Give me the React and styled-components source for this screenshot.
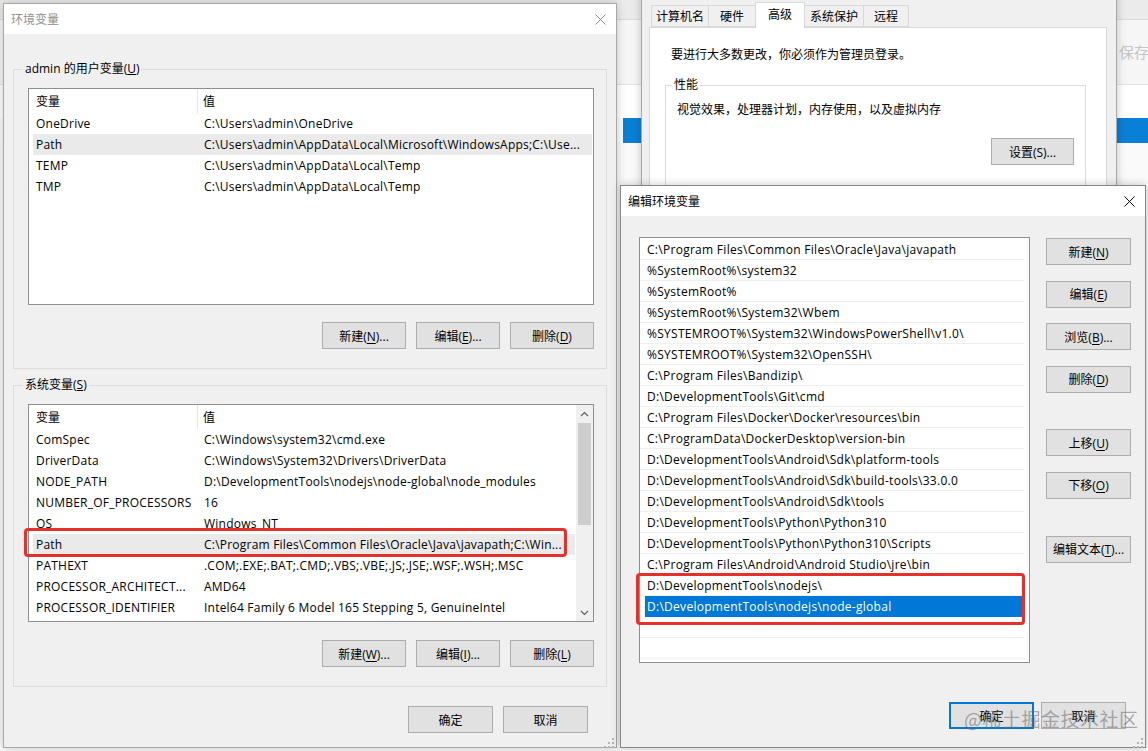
import React from "react";
import styled, { createGlobalStyle } from "styled-components";

const userVars = [
  ["OneDrive", "C:\\Users\\admin\\OneDrive"],
  ["Path", "C:\\Users\\admin\\AppData\\Local\\Microsoft\\WindowsApps;C:\\Use..."],
  ["TEMP", "C:\\Users\\admin\\AppData\\Local\\Temp"],
  ["TMP", "C:\\Users\\admin\\AppData\\Local\\Temp"],
];

const sysVars = [
  ["ComSpec", "C:\\Windows\\system32\\cmd.exe"],
  ["DriverData", "C:\\Windows\\System32\\Drivers\\DriverData"],
  ["NODE_PATH", "D:\\DevelopmentTools\\nodejs\\node-global\\node_modules"],
  ["NUMBER_OF_PROCESSORS", "16"],
  ["OS", "Windows_NT"],
  ["Path", "C:\\Program Files\\Common Files\\Oracle\\Java\\javapath;C:\\Win..."],
  ["PATHEXT", ".COM;.EXE;.BAT;.CMD;.VBS;.VBE;.JS;.JSE;.WSF;.WSH;.MSC"],
  ["PROCESSOR_ARCHITECT...", "AMD64"],
  ["PROCESSOR_IDENTIFIER", "Intel64 Family 6 Model 165 Stepping 5, GenuineIntel"],
];

const pathItems = [
  "C:\\Program Files\\Common Files\\Oracle\\Java\\javapath",
  "%SystemRoot%\\system32",
  "%SystemRoot%",
  "%SystemRoot%\\System32\\Wbem",
  "%SYSTEMROOT%\\System32\\WindowsPowerShell\\v1.0\\",
  "%SYSTEMROOT%\\System32\\OpenSSH\\",
  "C:\\Program Files\\Bandizip\\",
  "D:\\DevelopmentTools\\Git\\cmd",
  "C:\\Program Files\\Docker\\Docker\\resources\\bin",
  "C:\\ProgramData\\DockerDesktop\\version-bin",
  "D:\\DevelopmentTools\\Android\\Sdk\\platform-tools",
  "D:\\DevelopmentTools\\Android\\Sdk\\build-tools\\33.0.0",
  "D:\\DevelopmentTools\\Android\\Sdk\\tools",
  "D:\\DevelopmentTools\\Python\\Python310",
  "D:\\DevelopmentTools\\Python\\Python310\\Scripts",
  "C:\\Program Files\\Android\\Android Studio\\jre\\bin",
];

const GlobalStyle = createGlobalStyle`
  html, body { margin: 0; padding: 0; }
  body {
    width: 1148px;
    height: 751px;
    overflow: hidden;
    font-family: "Open Sans", "Noto Sans CJK SC", sans-serif;
    font-size: 12px;
    color: #000;
  }
`;

const Desktop = styled.div`
  position: relative;
  width: 1148px;
  height: 751px;
  overflow: hidden;
  background: #fbfbfb;
`;

/* page of the app behind the dialogs */
const BackApp = styled.div`
  display: flex;
  flex-direction: column;
  height: 100%;
`;

const BackTop = styled.div`
  height: 19px;
  background: #ebebeb;
  border-bottom: 1px solid #dadada;
`;

const BackHeader = styled.div`
  height: 64px;
  background: #f6f6f6;
  border-bottom: 1px solid #e2e2e2;
  display: flex;
  align-items: center;
  justify-content: flex-end;
`;

const BackHint = styled.span`
  color: #c4c4c4;
  font-size: 15px;
  font-family: "Noto Sans CJK SC", sans-serif;
  width: 29px;
  white-space: nowrap;
  overflow: hidden;
  margin-bottom: 2px;
`;

const BackGap = styled.div`
  height: 33px;
  background: #fff;
`;

const BlueBar = styled.div`
  height: 25px;
  margin-left: 623px;
  background: #0a7fd6;
`;

const BackRest = styled.div`
  flex: 1;
  background: #fafafa;
`;

/* windows */
const Window = styled.section`
  position: absolute;
  left: ${(p) => p.$x}px;
  top: ${(p) => p.$y}px;
  width: ${(p) => p.$w}px;
  height: ${(p) => p.$h}px;
  box-sizing: border-box;
  background: #f0f0f0;
  border: 1px solid ${(p) => (p.$active ? "#858585" : "#a8a8a8")};
  box-shadow: 0 0 9px rgba(0, 0, 0, 0.22);
  display: flex;
  flex-direction: column;
`;

const TitleBar = styled.div`
  height: 30px;
  flex: none;
  background: #fff;
  display: flex;
  align-items: center;
  justify-content: space-between;
  padding: 0 10px 0 7px;
`;

const Title = styled.span`
  font-size: 12px;
  color: ${(p) => (p.$active ? "#000" : "#8f8f8f")};
`;

const CloseIcon = ({ color }) => (
  <svg width="11" height="11" viewBox="0 0 11 11">
    <path d="M0.5 0.5L10.5 10.5M10.5 0.5L0.5 10.5" stroke={color} strokeWidth="1" fill="none" />
  </svg>
);

const Grip = styled.div`
  position: absolute;
  right: 2px;
  bottom: 2px;
  width: 10px;
  height: 10px;
`;

const GripDots = () => (
  <Grip>
    <svg width="10" height="10" viewBox="0 0 10 10">
      {[[8, 0], [8, 4], [4, 4], [8, 8], [4, 8], [0, 8]].map(([x, y]) => (
        <rect key={`${x}-${y}`} x={x} y={y} width="2" height="2" fill="#b4b4b4" />
      ))}
    </svg>
  </Grip>
);

const DialogBody = styled.div`
  flex: 1;
  display: flex;
  flex-direction: column;
  padding: ${(p) => p.$pad};
`;

const GroupBox = styled.div`
  position: relative;
  border: 1px solid #dcdcdc;
  padding: 18px 12px 19px 14px;
  margin-top: ${(p) => p.$mt || 0}px;
`;

const GroupLabel = styled.span`
  position: absolute;
  top: -9px;
  left: ${(p) => p.$left || 8}px;
  padding: 0 2px;
  background: ${(p) => p.$bg || "#f0f0f0"};
  line-height: 16px;
  font-size: 12px;
`;

const ListBox = styled.div`
  position: relative;
  height: ${(p) => p.$h}px;
  box-sizing: border-box;
  border: 1px solid #8f8f8f;
  background: #fff;
  display: flex;
`;

const ListMain = styled.div`
  flex: 1;
  min-width: 0;
`;

const HeaderRow = styled.div`
  display: grid;
  grid-template-columns: 169px 1fr;
  height: 24px;
`;

const HeaderCell = styled.div`
  display: flex;
  align-items: center;
  padding-left: ${(p) => p.$pad}px;
  border-right: ${(p) => (p.$divider ? "1px solid #e5e5e5" : "none")};
`;

const VarRow = styled.div`
  position: relative;
  display: grid;
  grid-template-columns: 165px 1fr;
  height: 21px;
  align-items: center;
  margin: 0 1px 0 4px;
  background: ${(p) => (p.$selected ? "#eaeaea" : "transparent")};
  white-space: nowrap;
  letter-spacing: 0.22px;
`;

const Cell = styled.span`
  padding-left: ${(p) => p.$pad}px;
  overflow: hidden;
`;

const Highlight = styled.div`
  position: absolute;
  top: ${(p) => p.$t}px;
  bottom: ${(p) => p.$b}px;
  left: ${(p) => p.$l}px;
  right: ${(p) => p.$r}px;
  border: 3px solid #e5302b;
  border-radius: 4px;
  pointer-events: none;
`;

const ScrollBar = styled.div`
  width: 17px;
  flex: none;
  background: #f0f0f0;
  display: flex;
  flex-direction: column;
  align-items: center;
`;

const ScrollArrow = styled.div`
  height: 17px;
  display: flex;
  align-items: center;
  justify-content: center;
`;

const ScrollThumb = styled.div`
  width: 13px;
  height: 102px;
  margin-top: 1px;
  background: #cdcdcd;
`;

const ScrollTrack = styled.div`
  flex: 1;
`;

const Chevron = ({ up }) => (
  <svg width="9" height="6" viewBox="0 0 9 6">
    <path d={up ? "M1 5L4.5 1.5L8 5" : "M1 1L4.5 4.5L8 1"} stroke="#606060" strokeWidth="1.2" fill="none" />
  </svg>
);

const ButtonRow = styled.div`
  display: flex;
  justify-content: flex-end;
  gap: ${(p) => p.$gap || 10}px;
  margin-top: ${(p) => p.$mt || 0}px;
  padding-right: ${(p) => p.$pr || 0}px;
`;

const Button = styled.button`
  width: ${(p) => p.$w || 84}px;
  height: 27px;
  margin-top: ${(p) => p.$mt || 0}px;
  padding: 0;
  box-sizing: border-box;
  background: #e1e1e1;
  border: ${(p) => (p.$default ? "2px solid #0078d7" : "1px solid #adadad")};
  font-family: inherit;
  font-size: 12px;
  color: #000;
  flex: none;
  u { text-underline-offset: 2px; }
`;

/* system properties */
const SysBody = styled.div`
  flex: 1;
  padding: 11px 9px 0 7px;
  display: flex;
  flex-direction: column;
`;

const TabStrip = styled.div`
  display: flex;
  align-items: flex-end;
  height: 25px;
  padding-left: 2px;
  position: relative;
  z-index: 1;
`;

const Tab = styled.div`
  width: ${(p) => p.$w}px;
  height: ${(p) => (p.$active ? 26 : 22)}px;
  box-sizing: border-box;
  display: flex;
  align-items: center;
  justify-content: center;
  padding-bottom: ${(p) => (p.$active ? 4 : 0)}px;
  background: ${(p) => (p.$active ? "#fff" : "#f0f0f0")};
  border: 1px solid #d9d9d9;
  border-bottom: ${(p) => (p.$active ? "none" : "1px solid #d9d9d9")};
  margin-left: ${(p) => (p.$first ? 0 : -1)}px;
  margin-bottom: ${(p) => (p.$active ? -1 : 0)}px;
`;

const TabPanel = styled.div`
  flex: 1;
  background: #fff;
  border: 1px solid #d9d9d9;
  padding: 19px 20px 0 15px;
`;

const Notice = styled.div`
  padding-left: 6px;
  height: 16px;
  line-height: 16px;
`;

const PerfGroup = styled.div`
  position: relative;
  margin-top: 22px;
  border: 1px solid #dcdcdc;
  height: 140px;
  padding: 16px 11px 0 11px;
`;

const PerfText = styled.div`
  line-height: 16px;
`;

const PerfActions = styled.div`
  display: flex;
  justify-content: flex-end;
  margin-top: 20px;
`;

/* edit dialog */
const EditTop = styled.div`
  display: flex;
  gap: 16px;
  height: 426px;
`;

const PathList = styled.div`
  width: 391px;
  box-sizing: border-box;
  border: 1px solid #8f8f8f;
  background: #fff;
  padding-top: 1px;
  letter-spacing: 0.28px;
`;

const PathRow = styled.div`
  height: 21px;
  box-sizing: border-box;
  border-bottom: 1px solid #efefef;
  margin-right: 5px;
  display: flex;
  align-items: center;
  white-space: nowrap;
  padding-left: 7px;
`;

const SelectedPath = styled.div`
  height: 21px;
  margin: 0 5px 0 5px;
  padding-left: 2px;
  display: flex;
  align-items: center;
  background: #0078d7;
  color: #fff;
  white-space: nowrap;
`;

const MarkedGroup = styled.div`
  position: relative;
`;

const SideButtons = styled.div`
  display: flex;
  flex-direction: column;
  gap: 15.6px;
  padding-top: 1px;
`;

const Watermark = styled.div`
  position: absolute;
  left: 964px;
  top: 705px;
  font-size: 19px;
  font-family: "Noto Sans CJK SC", sans-serif;
  color: rgba(105, 105, 105, 0.55);
  letter-spacing: 0.5px;
  pointer-events: none;
`;

const VarList = ({ rows, height, scroll, markRow }) => (
  <ListBox $h={height}>
    <ListMain>
      <HeaderRow>
        <HeaderCell $pad={7} $divider>变量</HeaderCell>
        <HeaderCell $pad={5}>值</HeaderCell>
      </HeaderRow>
      {rows.map(([name, value], i) => (
        <VarRow key={name + i} $selected={name === "Path"}>
          <Cell $pad={3}>{name}</Cell>
          <Cell $pad={6}>{value}</Cell>
          {markRow === i && <Highlight $t={-6} $b={-2} $l={-9} $r={8} />}
        </VarRow>
      ))}
    </ListMain>
    {scroll && (
      <ScrollBar>
        <ScrollArrow><Chevron up /></ScrollArrow>
        <ScrollThumb />
        <ScrollTrack />
        <ScrollArrow><Chevron /></ScrollArrow>
      </ScrollBar>
    )}
  </ListBox>
);

const App = () => (
  <Desktop>
    <GlobalStyle />
    <BackApp>
      <BackTop />
      <BackHeader>
        <BackHint>保存后</BackHint>
      </BackHeader>
      <BackGap />
      <BlueBar />
      <BackRest />
    </BackApp>

    {/* 系统属性 */}
    <Window $x={641} $y={-10} $w={476} $h={320}>
      <SysBody>
        <TabStrip>
          <Tab $w={58} $first>计算机名</Tab>
          <Tab $w={48}>硬件</Tab>
          <Tab $w={50} $active>高级</Tab>
          <Tab $w={60}>系统保护</Tab>
          <Tab $w={46}>远程</Tab>
        </TabStrip>
        <TabPanel>
          <Notice>要进行大多数更改，你必须作为管理员登录。</Notice>
          <PerfGroup>
            <GroupLabel $left={6} $bg="#fff">性能</GroupLabel>
            <PerfText>视觉效果，处理器计划，内存使用，以及虚拟内存</PerfText>
            <PerfActions>
              <Button $w={83}>设置(S)...</Button>
            </PerfActions>
          </PerfGroup>
        </TabPanel>
      </SysBody>
    </Window>

    {/* 环境变量 */}
    <Window $x={3} $y={3} $w={614} $h={745}>
      <TitleBar>
        <Title>环境变量</Title>
        <CloseIcon color="#8a8a8a" />
      </TitleBar>
      <DialogBody $pad="35px 9px 0 9px">
        <GroupBox>
          <GroupLabel $left={9}>admin 的用户变量(<u>U</u>)</GroupLabel>
          <VarList rows={userVars} height={217} />
          <ButtonRow $mt={17}>
            <Button>新建(<u>N</u>)...</Button>
            <Button>编辑(<u>E</u>)...</Button>
            <Button>删除(<u>D</u>)</Button>
          </ButtonRow>
        </GroupBox>
        <GroupBox $mt={16}>
          <GroupLabel $left={9}>系统变量(<u>S</u>)</GroupLabel>
          <VarList rows={sysVars} height={218} scroll markRow={5} />
          <ButtonRow $mt={18}>
            <Button>新建(<u>W</u>)...</Button>
            <Button>编辑(<u>I</u>)...</Button>
            <Button>删除(<u>L</u>)</Button>
          </ButtonRow>
        </GroupBox>
        <ButtonRow $mt={19} $pr={19}>
          <Button $w={85}>确定</Button>
          <Button $w={85}>取消</Button>
        </ButtonRow>
      </DialogBody>
      <GripDots />
    </Window>

    {/* 编辑环境变量 */}
    <Window $x={620} $y={185} $w={526} $h={563} $active>
      <TitleBar>
        <Title $active>编辑环境变量</Title>
        <CloseIcon color="#000" />
      </TitleBar>
      <DialogBody $pad="21px 14px 0 18px">
        <EditTop>
          <PathList>
            {pathItems.map((p) => (
              <PathRow key={p}>{p}</PathRow>
            ))}
            <MarkedGroup>
              <PathRow>D:\DevelopmentTools\nodejs\</PathRow>
              <SelectedPath>D:\DevelopmentTools\nodejs\node-global</SelectedPath>
              <Highlight $t={-2} $b={-8} $l={-4} $r={4} />
            </MarkedGroup>
            <PathRow />
            <PathRow />
          </PathList>
          <SideButtons>
            <Button $w={85}>新建(<u>N</u>)</Button>
            <Button $w={85}>编辑(<u>E</u>)</Button>
            <Button $w={85}>浏览(<u>B</u>)...</Button>
            <Button $w={85}>删除(<u>D</u>)</Button>
            <Button $w={85} $mt={21}>上移(<u>U</u>)</Button>
            <Button $w={85}>下移(<u>O</u>)</Button>
            <Button $w={85} $mt={21}>编辑文本(<u>T</u>)...</Button>
          </SideButtons>
        </EditTop>
        <ButtonRow $mt={39} $gap={7} $pr={5}>
          <Button $w={85} $default>确定</Button>
          <Button $w={85}>取消</Button>
        </ButtonRow>
      </DialogBody>
      <GripDots />
    </Window>

    <Watermark>@稀土掘金技术社区</Watermark>
  </Desktop>
);

export default App;
